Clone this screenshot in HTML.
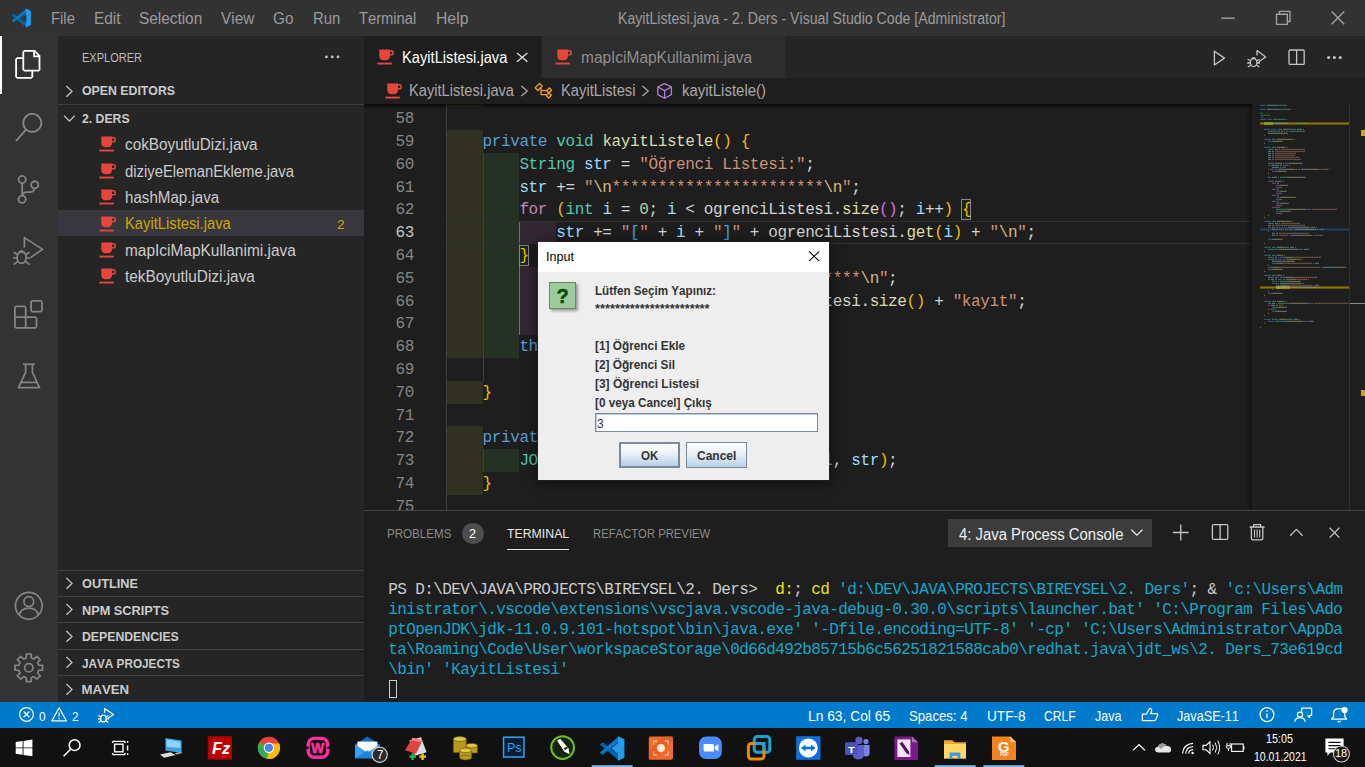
<!DOCTYPE html>
<html lang="tr"><head><meta charset="utf-8"><title>KayitListesi.java - 2. Ders - Visual Studio Code</title>
<style>

html,body{margin:0;padding:0;}
body{width:1365px;height:767px;overflow:hidden;background:#1e1e1e;position:relative;font-family:"Liberation Sans",sans-serif;font-kerning:none;}
.r{position:absolute;display:block;}
.t{position:absolute;display:block;white-space:pre;line-height:1;transform-origin:0 0;}
.q{-webkit-text-stroke:0.5px #0a4a0a;}
.i{font-style:italic;}
.wq{-webkit-text-stroke:0.6px #ff2da0;}
.code{position:absolute;white-space:pre;font-family:"Liberation Mono",monospace;line-height:1;}

</style></head>
<body>
<div class="r" style="left:0px;top:0px;width:1365px;height:36px;background:#323233;"></div>
<div class="r" style="left:0px;top:36px;width:58px;height:666px;background:#333333;"></div>
<div class="r" style="left:58px;top:36px;width:306px;height:666px;background:#252526;"></div>
<div class="r" style="left:364px;top:36px;width:1001px;height:42px;background:#252526;"></div>
<div class="r" style="left:364px;top:78px;width:1001px;height:26.4px;background:#1e1e1e;"></div>
<div class="r" style="left:364px;top:104.4px;width:1001px;height:406.4px;background:#1e1e1e;"></div>
<div class="r" style="left:364px;top:510.8px;width:1001px;height:191px;background:#1e1e1e;"></div>
<div class="r" style="left:0px;top:701.6px;width:1365px;height:26.4px;background:#007acc;"></div>
<div class="r" style="left:0px;top:728px;width:1365px;height:39px;background:#111111;"></div>
<svg class="r" style="left:10.5px;top:8px;" width="20.6" height="20" viewBox="0 0 100 100"><path fill="#0065a9" d="M2 37 L12 28 L75 77 L75 96 Z"/><path fill="#007acc" d="M2 63 L12 72 L75 23 L75 4 Z"/><path fill="#1f9cf0" d="M73 3 L98 15 L98 85 L73 97 L73 72 L50 50 L73 28 Z" fill-rule="evenodd"/><path fill="#323233" d="M75 30 L49 50 L75 70 Z"/></svg>
<span class="t" style="left:51.30px;top:10.99px;font-size:15.6px;color:#9b9b9b;transform:scaleX(0.9507);">File</span>
<span class="t" style="left:94.10px;top:10.99px;font-size:15.6px;color:#9b9b9b;transform:scaleX(0.9823);">Edit</span>
<span class="t" style="left:139.00px;top:10.99px;font-size:15.6px;color:#9b9b9b;transform:scaleX(0.9851);">Selection</span>
<span class="t" style="left:221.20px;top:10.99px;font-size:15.6px;color:#9b9b9b;transform:scaleX(0.9848);">View</span>
<span class="t" style="left:273.00px;top:10.99px;font-size:15.6px;color:#9b9b9b;transform:scaleX(0.9802);">Go</span>
<span class="t" style="left:312.50px;top:10.99px;font-size:15.6px;color:#9b9b9b;transform:scaleX(0.9577);">Run</span>
<span class="t" style="left:359.30px;top:10.99px;font-size:15.6px;color:#9b9b9b;transform:scaleX(0.9430);">Terminal</span>
<span class="t" style="left:436.00px;top:10.99px;font-size:15.6px;color:#9b9b9b;transform:scaleX(1.0100);">Help</span>
<span class="t" style="left:618.00px;top:10.99px;font-size:15.6px;color:#9b9b9b;transform:scaleX(0.9069);">KayitListesi.java - 2. Ders - Visual Studio Code [Administrator]</span>
<svg class="r" style="left:1205px;top:0px;" width="160" height="36" viewBox="0 0 160 36"><g stroke="#a0a0a0" stroke-width="1.4" fill="none"><path d="M16.3 18.2 H29.7"/><path d="M71.5 14.2 H82.3 V24.4 H71.5 Z"/><path d="M74.5 14 V11.4 H85 V21.5 H82.5"/><path d="M126.6 11.6 L139.2 24.2 M139.2 11.6 L126.6 24.2"/></g></svg>
<div class="r" style="left:364px;top:36px;width:177px;height:42px;background:#1e1e1e;"></div>
<div class="r" style="left:541.4px;top:36px;width:243.6px;height:42px;background:#2d2d2d;"></div>
<div class="r" style="left:541px;top:36px;width:1px;height:42px;background:#252526;"></div>
<svg class="r" style="left:377.2px;top:49.3px;" width="17.0" height="16.0" viewBox="0 0 17 16"><path fill="#e8463c" d="M2.3 0.4 H13 V6.5 Q13 11.2 8.6 11.2 H6.6 Q2.3 11.2 2.3 6.5 Z"/><path fill="none" stroke="#e8463c" stroke-width="1.5" d="M13 1.8 H14.6 Q16.2 1.8 16.2 3.7 Q16.2 5.8 14.6 5.8 H13"/><rect x="0.4" y="13.6" width="14.4" height="1.9" fill="#e8463c"/></svg>
<span class="t" style="left:402.20px;top:49.79px;font-size:15.6px;color:#ffffff;transform:scaleX(0.9426);">KayitListesi.java</span>
<svg class="r" style="left:514px;top:50px;" width="16" height="14" viewBox="0 0 16 14"><path stroke="#e0e0e0" stroke-width="1.3" fill="none" d="M3 2.9 L13.4 11.7 M13.4 2.9 L3 11.7"/></svg>
<svg class="r" style="left:555.3px;top:49.3px;" width="17.0" height="16.0" viewBox="0 0 17 16"><path fill="#e8463c" d="M2.3 0.4 H13 V6.5 Q13 11.2 8.6 11.2 H6.6 Q2.3 11.2 2.3 6.5 Z"/><path fill="none" stroke="#e8463c" stroke-width="1.5" d="M13 1.8 H14.6 Q16.2 1.8 16.2 3.7 Q16.2 5.8 14.6 5.8 H13"/><rect x="0.4" y="13.6" width="14.4" height="1.9" fill="#e8463c"/></svg>
<span class="t" style="left:580.70px;top:49.79px;font-size:15.6px;color:#8f8f8f;transform:scaleX(0.9915);">mapIciMapKullanimi.java</span>
<svg class="r" style="left:1205px;top:40px;" width="150" height="34" viewBox="0 0 150 34"><g stroke="#c5c5c5" stroke-width="1.3" fill="none" stroke-linejoin="round"><path d="M9.4 11.2 V25 L19.4 18.1 Z"/><path d="M52 15.5 V10.6 L60.6 17 L53.5 22"/><ellipse cx="48.6" cy="22.6" rx="3.3" ry="4"/><path d="M42.6 19.2 L45.6 20.8 M54.6 19.2 L51.6 20.8 M42.2 23 H45.2 M52 23 H55 M42.8 27 L45.6 25.2 M54.4 27 L51.6 25.2 M46.6 18.6 L48.6 17.6 L50.6 18.6"/><rect x="84" y="10" width="15.2" height="14.4" rx="1.2"/><path d="M91.6 10 V24.4"/></g><g fill="#c5c5c5"><circle cx="123.6" cy="17.6" r="1.5"/><circle cx="129.4" cy="17.6" r="1.5"/><circle cx="135.2" cy="17.6" r="1.5"/></g></svg>
<svg class="r" style="left:384.6px;top:83.2px;" width="17.0" height="16.0" viewBox="0 0 17 16"><path fill="#e8463c" d="M2.3 0.4 H13 V6.5 Q13 11.2 8.6 11.2 H6.6 Q2.3 11.2 2.3 6.5 Z"/><path fill="none" stroke="#e8463c" stroke-width="1.5" d="M13 1.8 H14.6 Q16.2 1.8 16.2 3.7 Q16.2 5.8 14.6 5.8 H13"/><rect x="0.4" y="13.6" width="14.4" height="1.9" fill="#e8463c"/></svg>
<span class="t" style="left:409.30px;top:83.49px;font-size:15.6px;color:#a9a9a9;transform:scaleX(0.9391);">KayitListesi.java</span>
<svg class="r" style="left:519.8px;top:85.2px;" width="9.0" height="12.0" viewBox="0 0 9 12"><path stroke="#a9a9a9" stroke-width="1.3" fill="none" d="M1.4 1 L7.2 6 L1.4 11"/></svg>
<svg class="r" style="left:534px;top:82px;" width="19" height="18" viewBox="0 0 19 18"><g stroke="#ee9d28" stroke-width="1.35" fill="none" stroke-linejoin="round"><path d="M1.2 5.8 L5.6 1.4 L8.2 4 L3.8 8.4 Z"/><path d="M7 5.4 V12.6 H12.4"/><path d="M7 8.6 H12.8"/><path d="M12.6 8.8 L15.4 6 L17.6 8.2 L14.8 11 Z"/><path d="M12.2 13.6 L15 10.9 L17.4 13.2 L14.6 16 Z" /></g></svg>
<span class="t" style="left:560.70px;top:83.49px;font-size:15.6px;color:#a9a9a9;transform:scaleX(0.9445);">KayitListesi</span>
<svg class="r" style="left:641.4px;top:85.2px;" width="9.0" height="12.0" viewBox="0 0 9 12"><path stroke="#a9a9a9" stroke-width="1.3" fill="none" d="M1.4 1 L7.2 6 L1.4 11"/></svg>
<svg class="r" style="left:656px;top:81.8px;" width="18" height="18" viewBox="0 0 18 18"><g stroke="#b180d7" stroke-width="1.3" fill="none" stroke-linejoin="round"><path d="M8.6 1.6 L15.4 5 V12.6 L8.6 16.2 L1.8 12.6 V5 Z"/><path d="M1.8 5 L8.6 8.6 L15.4 5 M8.6 8.6 V16.2"/></g></svg>
<span class="t" style="left:681.80px;top:83.49px;font-size:15.6px;color:#a9a9a9;transform:scaleX(0.9597);">kayitListele()</span>
<div class="r" style="left:0px;top:36px;width:2.4px;height:57.6px;background:#ffffff;"></div>
<svg class="r" style="left:14.4px;top:50.4px;" width="28.8" height="28.8" viewBox="0 0 24 24"><g fill="#ffffff"><path d="M17.5 0h-9L7 1.5V6H2.5L1 7.5v15.07L2.5 24h12.07L16 22.57V18h4.7l1.3-1.43V4.5L17.5 0zm0 2.12l2.38 2.38H17.5V2.12zm-3 20.38h-12v-15H7v9.07L8.5 18h6v4.5zm6-6h-12v-15H16V6h4.5v10.5z"/></g></svg>
<svg class="r" style="left:14.4px;top:112.8px;" width="28.8" height="28.8" viewBox="0 0 24 24"><g fill="#858585"><path d="M15.25 0a8.25 8.25 0 0 0-6.18 13.72L1 22.88l1.12 1 8.05-9.12A8.251 8.251 0 1 0 15.25.01V0zm0 15a6.75 6.75 0 1 1 0-13.5 6.75 6.75 0 0 1 0 13.5z"/></g></svg>
<svg class="r" style="left:14.4px;top:175.2px;" width="28.8" height="28.8" viewBox="0 0 24 24"><g fill="#858585"><path d="M21.007 8.222A3.738 3.738 0 0 0 15.045 5.2a3.737 3.737 0 0 0 1.156 6.583 2.988 2.988 0 0 1-2.668 1.67h-2.99a4.456 4.456 0 0 0-2.989 1.165V7.4a3.737 3.737 0 1 0-1.494 0v9.117a3.776 3.776 0 1 0 1.816.099 2.99 2.99 0 0 1 2.668-1.667h2.99a4.484 4.484 0 0 0 4.223-3.039 3.736 3.736 0 0 0 3.25-3.687zM4.565 3.738a2.242 2.242 0 1 1 4.484 0 2.242 2.242 0 0 1-4.484 0zm4.484 16.441a2.242 2.242 0 1 1-4.484 0 2.242 2.242 0 0 1 4.484 0zm8.221-9.715a2.242 2.242 0 1 1 0-4.485 2.242 2.242 0 0 1 0 4.485z"/></g></svg>
<svg class="r" style="left:0px;top:223.2px;" width="58" height="57.6" viewBox="0 0 58 57.6"><g stroke="#858585" stroke-width="1.7" fill="none" stroke-linejoin="round" stroke-linecap="butt"><path d="M24.4 24.5 V14.6 L42.6 26.4 L30.5 34.6"/><ellipse cx="21.6" cy="34.6" rx="4.6" ry="5.8"/><path d="M13.6 29.2 L17.6 31.4 M29.6 29.2 L25.6 31.4 M13 35 H17 M26.2 35 H30.2 M13.6 41.6 L17.6 38.6 M29.6 41.6 L25.6 38.6 M18.4 29.6 L21.6 27.6 L24.8 29.6"/></g></svg>
<svg class="r" style="left:14.4px;top:300.0px;" width="28.8" height="28.8" viewBox="0 0 24 24"><g fill="#858585"><path d="M13.5 1.5L15 0h7.5L24 1.5V9l-1.5 1.5H15L13.5 9V1.5zm1.5 0V9h7.5V1.5H15zM0 15V6l1.5-1.5H9L10.5 6v7.5H18l1.5 1.5v7.5L18 24H1.5L0 22.5V15zm9-1.5V6H1.5v7.5H9zM9 15H1.5v7.5H9V15zm1.5 7.5H18V15h-7.5v7.5z"/></g></svg>
<svg class="r" style="left:0px;top:348px;" width="58" height="57.6" viewBox="0 0 58 57.6"><g stroke="#858585" stroke-width="1.7" fill="none" stroke-linejoin="round"><path d="M23 16.2 H35"/><path d="M25.6 16.2 V24.4 L18.4 39.6 H39.6 L32.4 24.4 V16.2"/><path d="M20.8 34.4 H37.2"/></g></svg>
<svg class="r" style="left:0px;top:576.8px;" width="58" height="57.6" viewBox="0 0 58 57.6"><g stroke="#858585" stroke-width="1.7" fill="none"><circle cx="28.8" cy="28.8" r="13.4"/><circle cx="28.8" cy="24.6" r="4.9"/><path d="M19.4 38.2 Q20.6 31.2 28.8 31.2 Q37 31.2 38.2 38.2"/></g></svg>
<svg class="r" style="left:0px;top:639.2px;" width="58" height="57.6" viewBox="0 0 58 57.6"><g stroke="#858585" stroke-width="1.7" fill="none" stroke-linejoin="round"><path d="M26.39 15.01 L31.21 15.01 L31.34 18.92 L33.99 20.02 L36.85 17.35 L40.25 20.75 L37.58 23.61 L38.68 26.26 L42.59 26.39 L42.59 31.21 L38.68 31.34 L37.58 33.99 L40.25 36.85 L36.85 40.25 L33.99 37.58 L31.34 38.68 L31.21 42.59 L26.39 42.59 L26.26 38.68 L23.61 37.58 L20.75 40.25 L17.35 36.85 L20.02 33.99 L18.92 31.34 L15.01 31.21 L15.01 26.39 L18.92 26.26 L20.02 23.61 L17.35 20.75 L20.75 17.35 L23.61 20.02 L26.26 18.92 Z"/><circle cx="28.8" cy="28.8" r="4.2"/></g></svg>
<span class="t" style="left:81.50px;top:50.73px;font-size:13.2px;color:#bbbbbb;transform:scaleX(0.8353);">EXPLORER</span>
<svg class="r" style="left:322px;top:50px;" width="20" height="14" viewBox="0 0 20 14"><g fill="#c5c5c5"><circle cx="4.4" cy="6.9" r="1.4"/><circle cx="10.2" cy="6.9" r="1.4"/><circle cx="16" cy="6.9" r="1.4"/></g></svg>
<svg class="r" style="left:65.4px;top:85px;" width="9" height="13" viewBox="0 0 9 13"><path stroke="#c5c5c5" stroke-width="1.3" fill="none" d="M1.4 1 L7 6.4 L1.4 11.8"/></svg>
<span class="t" style="left:81.50px;top:84.33px;font-size:13.2px;color:#cccccc;font-weight:700;transform:scaleX(0.9332);">OPEN EDITORS</span>
<div class="r" style="left:58px;top:104px;width:306px;height:1px;background:#3f3f40;"></div>
<svg class="r" style="left:63px;top:114.4px;" width="13" height="9" viewBox="0 0 13 9"><path stroke="#c5c5c5" stroke-width="1.3" fill="none" d="M1 1.6 L6.4 7 L11.8 1.6"/></svg>
<span class="t" style="left:81.50px;top:111.73px;font-size:13.2px;color:#cccccc;font-weight:700;transform:scaleX(0.9276);">2. DERS</span>
<svg class="r" style="left:99px;top:136.4px;" width="17.0" height="16.0" viewBox="0 0 17 16"><path fill="#e8463c" d="M2.3 0.4 H13 V6.5 Q13 11.2 8.6 11.2 H6.6 Q2.3 11.2 2.3 6.5 Z"/><path fill="none" stroke="#e8463c" stroke-width="1.5" d="M13 1.8 H14.6 Q16.2 1.8 16.2 3.7 Q16.2 5.8 14.6 5.8 H13"/><rect x="0.4" y="13.6" width="14.4" height="1.9" fill="#e8463c"/></svg>
<span class="t" style="left:125.00px;top:137.19px;font-size:15.6px;color:#cccccc;transform:scaleX(0.9806);">cokBoyutluDizi.java</span>
<svg class="r" style="left:99px;top:162.8px;" width="17.0" height="16.0" viewBox="0 0 17 16"><path fill="#e8463c" d="M2.3 0.4 H13 V6.5 Q13 11.2 8.6 11.2 H6.6 Q2.3 11.2 2.3 6.5 Z"/><path fill="none" stroke="#e8463c" stroke-width="1.5" d="M13 1.8 H14.6 Q16.2 1.8 16.2 3.7 Q16.2 5.8 14.6 5.8 H13"/><rect x="0.4" y="13.6" width="14.4" height="1.9" fill="#e8463c"/></svg>
<span class="t" style="left:125.00px;top:163.59px;font-size:15.6px;color:#cccccc;transform:scaleX(0.9511);">diziyeElemanEkleme.java</span>
<svg class="r" style="left:99px;top:189.20000000000002px;" width="17.0" height="16.0" viewBox="0 0 17 16"><path fill="#e8463c" d="M2.3 0.4 H13 V6.5 Q13 11.2 8.6 11.2 H6.6 Q2.3 11.2 2.3 6.5 Z"/><path fill="none" stroke="#e8463c" stroke-width="1.5" d="M13 1.8 H14.6 Q16.2 1.8 16.2 3.7 Q16.2 5.8 14.6 5.8 H13"/><rect x="0.4" y="13.6" width="14.4" height="1.9" fill="#e8463c"/></svg>
<span class="t" style="left:125.00px;top:189.99px;font-size:15.6px;color:#cccccc;transform:scaleX(0.9702);">hashMap.java</span>
<div class="r" style="left:58px;top:210.0px;width:306px;height:26.4px;background:#37373d;"></div>
<svg class="r" style="left:99px;top:215.6px;" width="17.0" height="16.0" viewBox="0 0 17 16"><path fill="#e8463c" d="M2.3 0.4 H13 V6.5 Q13 11.2 8.6 11.2 H6.6 Q2.3 11.2 2.3 6.5 Z"/><path fill="none" stroke="#e8463c" stroke-width="1.5" d="M13 1.8 H14.6 Q16.2 1.8 16.2 3.7 Q16.2 5.8 14.6 5.8 H13"/><rect x="0.4" y="13.6" width="14.4" height="1.9" fill="#e8463c"/></svg>
<span class="t" style="left:125.00px;top:216.39px;font-size:15.6px;color:#cca700;transform:scaleX(0.9462);">KayitListesi.java</span>
<span class="t" style="left:336.60px;top:217.69px;font-size:13.6px;color:#cca700;transform:scaleX(1.0050);">2</span>
<svg class="r" style="left:99px;top:242.0px;" width="17.0" height="16.0" viewBox="0 0 17 16"><path fill="#e8463c" d="M2.3 0.4 H13 V6.5 Q13 11.2 8.6 11.2 H6.6 Q2.3 11.2 2.3 6.5 Z"/><path fill="none" stroke="#e8463c" stroke-width="1.5" d="M13 1.8 H14.6 Q16.2 1.8 16.2 3.7 Q16.2 5.8 14.6 5.8 H13"/><rect x="0.4" y="13.6" width="14.4" height="1.9" fill="#e8463c"/></svg>
<span class="t" style="left:125.00px;top:242.79px;font-size:15.6px;color:#cccccc;transform:scaleX(0.9903);">mapIciMapKullanimi.java</span>
<svg class="r" style="left:99px;top:268.40000000000003px;" width="17.0" height="16.0" viewBox="0 0 17 16"><path fill="#e8463c" d="M2.3 0.4 H13 V6.5 Q13 11.2 8.6 11.2 H6.6 Q2.3 11.2 2.3 6.5 Z"/><path fill="none" stroke="#e8463c" stroke-width="1.5" d="M13 1.8 H14.6 Q16.2 1.8 16.2 3.7 Q16.2 5.8 14.6 5.8 H13"/><rect x="0.4" y="13.6" width="14.4" height="1.9" fill="#e8463c"/></svg>
<span class="t" style="left:125.00px;top:269.19px;font-size:15.6px;color:#cccccc;transform:scaleX(0.9860);">tekBoyutluDizi.java</span>
<div class="r" style="left:58px;top:569.6px;width:306px;height:1px;background:#3f3f40;"></div>
<svg class="r" style="left:65.4px;top:577.0px;" width="9" height="13" viewBox="0 0 9 13"><path stroke="#c5c5c5" stroke-width="1.3" fill="none" d="M1.4 1 L7 6.4 L1.4 11.8"/></svg>
<span class="t" style="left:81.50px;top:577.43px;font-size:13.2px;color:#cccccc;font-weight:700;transform:scaleX(0.9673);">OUTLINE</span>
<div class="r" style="left:58px;top:596.0px;width:306px;height:1px;background:#3f3f40;"></div>
<svg class="r" style="left:65.4px;top:603.4px;" width="9" height="13" viewBox="0 0 9 13"><path stroke="#c5c5c5" stroke-width="1.3" fill="none" d="M1.4 1 L7 6.4 L1.4 11.8"/></svg>
<span class="t" style="left:81.50px;top:603.83px;font-size:13.2px;color:#cccccc;font-weight:700;transform:scaleX(0.9653);">NPM SCRIPTS</span>
<div class="r" style="left:58px;top:622.4px;width:306px;height:1px;background:#3f3f40;"></div>
<svg class="r" style="left:65.4px;top:629.8px;" width="9" height="13" viewBox="0 0 9 13"><path stroke="#c5c5c5" stroke-width="1.3" fill="none" d="M1.4 1 L7 6.4 L1.4 11.8"/></svg>
<span class="t" style="left:81.50px;top:630.23px;font-size:13.2px;color:#cccccc;font-weight:700;transform:scaleX(0.9302);">DEPENDENCIES</span>
<div class="r" style="left:58px;top:648.8000000000001px;width:306px;height:1px;background:#3f3f40;"></div>
<svg class="r" style="left:65.4px;top:656.2px;" width="9" height="13" viewBox="0 0 9 13"><path stroke="#c5c5c5" stroke-width="1.3" fill="none" d="M1.4 1 L7 6.4 L1.4 11.8"/></svg>
<span class="t" style="left:81.50px;top:656.63px;font-size:13.2px;color:#cccccc;font-weight:700;transform:scaleX(0.8905);">JAVA PROJECTS</span>
<div class="r" style="left:58px;top:675.2px;width:306px;height:1px;background:#3f3f40;"></div>
<svg class="r" style="left:65.4px;top:682.6px;" width="9" height="13" viewBox="0 0 9 13"><path stroke="#c5c5c5" stroke-width="1.3" fill="none" d="M1.4 1 L7 6.4 L1.4 11.8"/></svg>
<span class="t" style="left:81.50px;top:683.03px;font-size:13.2px;color:#cccccc;font-weight:700;">MAVEN</span>
<div class="r" style="left:0;top:104.4px;width:1365px;height:406.4px;overflow:hidden"><div class="r" style="left:0;top:-104.4px"><div class="r" style="left:445.7px;top:84.4px;width:36.86px;height:22.8px;background:rgba(255,255,64,0.085);"></div>
<div class="r" style="left:445.7px;top:130.0px;width:36.86px;height:22.8px;background:rgba(255,255,64,0.085);"></div>
<div class="r" style="left:445.7px;top:152.8px;width:36.86px;height:22.8px;background:rgba(255,255,64,0.085);"></div>
<div class="r" style="left:482.56px;top:152.8px;width:36.86px;height:22.8px;background:rgba(127,255,127,0.085);"></div>
<div class="r" style="left:445.7px;top:175.6px;width:36.86px;height:22.8px;background:rgba(255,255,64,0.085);"></div>
<div class="r" style="left:482.56px;top:175.6px;width:36.86px;height:22.8px;background:rgba(127,255,127,0.085);"></div>
<div class="r" style="left:445.7px;top:198.4px;width:36.86px;height:22.8px;background:rgba(255,255,64,0.085);"></div>
<div class="r" style="left:482.56px;top:198.4px;width:36.86px;height:22.8px;background:rgba(127,255,127,0.085);"></div>
<div class="r" style="left:445.7px;top:221.2px;width:36.86px;height:22.8px;background:rgba(255,255,64,0.085);"></div>
<div class="r" style="left:482.56px;top:221.2px;width:36.86px;height:22.8px;background:rgba(127,255,127,0.085);"></div>
<div class="r" style="left:519.42px;top:221.2px;width:36.86px;height:22.8px;background:rgba(255,127,255,0.085);"></div>
<div class="r" style="left:445.7px;top:244.0px;width:36.86px;height:22.8px;background:rgba(255,255,64,0.085);"></div>
<div class="r" style="left:482.56px;top:244.0px;width:36.86px;height:22.8px;background:rgba(127,255,127,0.085);"></div>
<div class="r" style="left:445.7px;top:266.8px;width:36.86px;height:22.8px;background:rgba(255,255,64,0.085);"></div>
<div class="r" style="left:482.56px;top:266.8px;width:36.86px;height:22.8px;background:rgba(127,255,127,0.085);"></div>
<div class="r" style="left:519.42px;top:266.8px;width:36.86px;height:22.8px;background:rgba(255,127,255,0.085);"></div>
<div class="r" style="left:445.7px;top:289.6px;width:36.86px;height:22.8px;background:rgba(255,255,64,0.085);"></div>
<div class="r" style="left:482.56px;top:289.6px;width:36.86px;height:22.8px;background:rgba(127,255,127,0.085);"></div>
<div class="r" style="left:519.42px;top:289.6px;width:36.86px;height:22.8px;background:rgba(255,127,255,0.085);"></div>
<div class="r" style="left:445.7px;top:312.4px;width:36.86px;height:22.8px;background:rgba(255,255,64,0.085);"></div>
<div class="r" style="left:482.56px;top:312.4px;width:36.86px;height:22.8px;background:rgba(127,255,127,0.085);"></div>
<div class="r" style="left:519.42px;top:312.4px;width:36.86px;height:22.8px;background:rgba(255,127,255,0.085);"></div>
<div class="r" style="left:445.7px;top:335.2px;width:36.86px;height:22.8px;background:rgba(255,255,64,0.085);"></div>
<div class="r" style="left:482.56px;top:335.2px;width:36.86px;height:22.8px;background:rgba(127,255,127,0.085);"></div>
<div class="r" style="left:445.7px;top:380.8px;width:36.86px;height:22.8px;background:rgba(255,255,64,0.085);"></div>
<div class="r" style="left:445.7px;top:426.4px;width:36.86px;height:22.8px;background:rgba(255,255,64,0.085);"></div>
<div class="r" style="left:445.7px;top:449.2px;width:36.86px;height:22.8px;background:rgba(255,255,64,0.085);"></div>
<div class="r" style="left:482.56px;top:449.2px;width:36.86px;height:22.8px;background:rgba(127,255,127,0.085);"></div>
<div class="r" style="left:445.7px;top:472.0px;width:36.86px;height:22.8px;background:rgba(255,255,64,0.085);"></div>
<div class="r" style="left:445.7px;top:104.4px;width:1px;height:406.4px;background:#404040;"></div>
<div class="r" style="left:482.6px;top:152.8px;width:1px;height:228.0px;background:#404040;"></div>
<div class="r" style="left:482.6px;top:449.2px;width:1px;height:22.8px;background:#404040;"></div>
<div class="r" style="left:519.4px;top:221.2px;width:1px;height:114.0px;background:#707070;"></div>
<div class="r" style="left:446px;top:221.2px;width:806px;height:22.8px;background:transparent;box-sizing:border-box;border-top:1.4px solid #303030;border-bottom:1.4px solid #303030;"></div>
<div class="r" style="left:961.2px;top:199.39999999999998px;width:10px;height:21px;background:rgba(0,100,0,0.1);box-sizing:border-box;border:1px solid #888888;"></div>
<div class="r" style="left:518.9px;top:245.0px;width:10px;height:21px;background:rgba(0,100,0,0.1);box-sizing:border-box;border:1px solid #888888;"></div>
<span class="code" style="left:395.6px;top:88.43px;font-size:16.0px;letter-spacing:-0.385px;color:#858585">57</span>
<span class="code" style="left:482.56px;top:88.43px;font-size:16.0px;letter-spacing:-0.385px;color:#d4d4d4"><span style="color:#eebc00">}</span></span>
<span class="code" style="left:395.6px;top:111.23px;font-size:16.0px;letter-spacing:-0.385px;color:#858585">58</span>
<span class="code" style="left:395.6px;top:134.03px;font-size:16.0px;letter-spacing:-0.385px;color:#858585">59</span>
<span class="code" style="left:482.56px;top:134.03px;font-size:16.0px;letter-spacing:-0.385px;color:#d4d4d4"><span style="color:#569cd6">private</span> <span style="color:#4ec9b0">void</span> <span style="color:#dcdcaa">kayitListele</span><span style="color:#eebc00">()</span> <span style="color:#eebc00">{</span></span>
<span class="code" style="left:395.6px;top:156.83px;font-size:16.0px;letter-spacing:-0.385px;color:#858585">60</span>
<span class="code" style="left:519.42px;top:156.83px;font-size:16.0px;letter-spacing:-0.385px;color:#d4d4d4"><span style="color:#4ec9b0">String</span> <span style="color:#9cdcfe">str</span> = <span style="color:#ce9178">"Öğrenci Listesi:"</span>;</span>
<span class="code" style="left:395.6px;top:179.63px;font-size:16.0px;letter-spacing:-0.385px;color:#858585">61</span>
<span class="code" style="left:519.42px;top:179.63px;font-size:16.0px;letter-spacing:-0.385px;color:#d4d4d4"><span style="color:#9cdcfe">str</span> += <span style="color:#ce9178">"</span><span style="color:#d7ba7d">\n</span><span style="color:#ce9178">***********************</span><span style="color:#d7ba7d">\n</span><span style="color:#ce9178">"</span>;</span>
<span class="code" style="left:395.6px;top:202.43px;font-size:16.0px;letter-spacing:-0.385px;color:#858585">62</span>
<span class="code" style="left:519.42px;top:202.43px;font-size:16.0px;letter-spacing:-0.385px;color:#d4d4d4"><span style="color:#c586c0">for</span> <span style="color:#eebc00">(</span><span style="color:#4ec9b0">int</span> <span style="color:#9cdcfe">i</span> = <span style="color:#b5cea8">0</span>; <span style="color:#9cdcfe">i</span> &lt; ogrenciListesi.<span style="color:#dcdcaa">size</span><span style="color:#da70d6">()</span>; <span style="color:#9cdcfe">i</span>++<span style="color:#eebc00">)</span> <span style="color:#eebc00">{</span></span>
<span class="code" style="left:395.6px;top:225.23px;font-size:16.0px;letter-spacing:-0.385px;color:#c6c6c6">63</span>
<span class="code" style="left:556.28px;top:225.23px;font-size:16.0px;letter-spacing:-0.385px;color:#d4d4d4"><span style="color:#9cdcfe">str</span> += <span style="color:#ce9178">"</span><span style="color:#3ba0e6">[</span><span style="color:#ce9178">"</span> + <span style="color:#9cdcfe">i</span> + <span style="color:#ce9178">"</span><span style="color:#3ba0e6">]</span><span style="color:#ce9178">"</span> + ogrenciListesi.<span style="color:#dcdcaa">get</span><span style="color:#eebc00">(</span><span style="color:#9cdcfe">i</span><span style="color:#eebc00">)</span> + <span style="color:#ce9178">"</span><span style="color:#d7ba7d">\n</span><span style="color:#ce9178">"</span>;</span>
<span class="code" style="left:395.6px;top:248.03px;font-size:16.0px;letter-spacing:-0.385px;color:#858585">64</span>
<span class="code" style="left:519.42px;top:248.03px;font-size:16.0px;letter-spacing:-0.385px;color:#d4d4d4"><span style="color:#eebc00">}</span></span>
<span class="code" style="left:395.6px;top:270.83px;font-size:16.0px;letter-spacing:-0.385px;color:#858585">65</span>
<span class="code" style="left:556.28px;top:270.83px;font-size:16.0px;letter-spacing:-0.385px;color:#d4d4d4"><span style="color:#9cdcfe">str</span> += <span style="color:#ce9178">"</span><span style="color:#d7ba7d">\n</span><span style="color:#ce9178">***********************</span><span style="color:#d7ba7d">\n</span><span style="color:#ce9178">"</span>;</span>
<span class="code" style="left:395.6px;top:293.63px;font-size:16.0px;letter-spacing:-0.385px;color:#858585">66</span>
<span class="code" style="left:556.28px;top:293.63px;font-size:16.0px;letter-spacing:-0.385px;color:#d4d4d4"><span style="color:#9cdcfe">str</span> += <span style="color:#ce9178">"Toplam "</span> + ogrenciListesi.<span style="color:#dcdcaa">size</span><span style="color:#eebc00">()</span> + <span style="color:#ce9178">"kayıt"</span>;</span>
<span class="code" style="left:395.6px;top:316.43px;font-size:16.0px;letter-spacing:-0.385px;color:#858585">67</span>
<span class="code" style="left:395.6px;top:339.23px;font-size:16.0px;letter-spacing:-0.385px;color:#858585">68</span>
<span class="code" style="left:519.42px;top:339.23px;font-size:16.0px;letter-spacing:-0.385px;color:#d4d4d4"><span style="color:#569cd6">this</span>.<span style="color:#dcdcaa">anaMenu</span><span style="color:#eebc00">()</span>;</span>
<span class="code" style="left:395.6px;top:362.03px;font-size:16.0px;letter-spacing:-0.385px;color:#858585">69</span>
<span class="code" style="left:395.6px;top:384.83px;font-size:16.0px;letter-spacing:-0.385px;color:#858585">70</span>
<span class="code" style="left:482.56px;top:384.83px;font-size:16.0px;letter-spacing:-0.385px;color:#d4d4d4"><span style="color:#eebc00">}</span></span>
<span class="code" style="left:395.6px;top:407.63px;font-size:16.0px;letter-spacing:-0.385px;color:#858585">71</span>
<span class="code" style="left:395.6px;top:430.43px;font-size:16.0px;letter-spacing:-0.385px;color:#858585">72</span>
<span class="code" style="left:482.56px;top:430.43px;font-size:16.0px;letter-spacing:-0.385px;color:#d4d4d4"><span style="color:#569cd6">private</span> <span style="color:#4ec9b0">void</span> <span style="color:#dcdcaa">mesaj</span><span style="color:#eebc00">(</span><span style="color:#4ec9b0">String</span> <span style="color:#9cdcfe">str</span><span style="color:#eebc00">)</span> <span style="color:#eebc00">{</span></span>
<span class="code" style="left:395.6px;top:453.23px;font-size:16.0px;letter-spacing:-0.385px;color:#858585">73</span>
<span class="code" style="left:519.42px;top:453.23px;font-size:16.0px;letter-spacing:-0.385px;color:#d4d4d4"><span style="color:#4ec9b0">JOptionPane</span>.<span style="color:#dcdcaa">showMessageDialog</span><span style="color:#eebc00">(</span><span style="color:#569cd6">null</span>, <span style="color:#9cdcfe">str</span><span style="color:#eebc00">)</span>;</span>
<span class="code" style="left:395.6px;top:476.03px;font-size:16.0px;letter-spacing:-0.385px;color:#858585">74</span>
<span class="code" style="left:482.56px;top:476.03px;font-size:16.0px;letter-spacing:-0.385px;color:#d4d4d4"><span style="color:#eebc00">}</span></span>
<span class="code" style="left:395.6px;top:498.83px;font-size:16.0px;letter-spacing:-0.385px;color:#858585">75</span></div></div>
<div class="r" style="left:1246px;top:104.4px;width:6px;height:406.4px;background:linear-gradient(90deg,#00000000,#00000066);"></div>
<div class="r" style="left:1349px;top:104.4px;width:1px;height:406.4px;background:#303031;"></div>
<svg class="r" style="left:0;top:0" width="1365" height="520" viewBox="0 0 1365 520"><rect x="1260" y="122.4" width="89" height="2.2" fill="#8a7200"/><rect x="1264" y="122.4" width="9" height="2.2" fill="#d9b400"/><rect x="1260" y="286.4" width="89" height="2.2" fill="#8a7200"/><rect x="1276" y="286.4" width="14" height="2.2" fill="#d9b400"/><rect x="1260" y="228.4" width="89" height="2.2" fill="#1f3f60"/><path stroke="#3f6f98" stroke-width="1.3" stroke-opacity="0.62" fill="none" d="M1260 105.4h6M1260 109.4h6M1260 119.4h6M1267 119.4h5M1291 123.4h3M1264 129.4h6M1271 129.4h6M1286 131.4h3M1264 139.4h7M1268 141.4h4M1264 147.4h7M1285 163.4h4M1283 165.4h4M1272 171.4h4M1276 185.4h4M1276 191.4h4M1276 197.4h4M1276 203.4h4M1306 209.4h4M1276 211.4h4M1264 221.4h7M1268 239.4h4M1264 247.4h7M1298 249.4h4M1264 255.4h7M1280 257.4h4M1278 259.4h4M1272 263.4h4M1268 267.4h4M1268 269.4h4M1264 275.4h7M1280 277.4h4M1278 279.4h4M1276 285.4h4M1268 293.4h4M1264 301.4h7M1308 303.4h4M1272 311.4h4M1264 319.4h7M1268 321.4h6M1303 321.4h4"/><path stroke="#6f97ae" stroke-width="1.3" stroke-opacity="0.62" fill="none" d="M1267 105.4h4M1272 105.4h4M1267 109.4h5M1273 109.4h5M1274 123.4h14M1297 129.4h4M1281 131.4h2M1268 133.4h2M1275 149.4h3M1268 151.4h3M1268 153.4h3M1268 155.4h3M1268 157.4h3M1268 159.4h3M1275 163.4h7M1298 163.4h3M1272 165.4h7M1272 167.4h7M1279 169.4h7M1302 169.4h7M1272 177.4h5M1297 177.4h7M1276 181.4h5M1275 223.4h3M1268 225.4h3M1277 227.4h1M1284 227.4h1M1288 227.4h14M1311 227.4h1M1272 229.4h3M1285 229.4h1M1295 229.4h14M1314 229.4h1M1272 233.4h3M1272 235.4h3M1291 235.4h14M1290 247.4h3M1304 249.4h3M1275 257.4h2M1272 259.4h2M1287 259.4h2M1272 261.4h14M1291 261.4h2M1315 263.4h2M1323 267.4h14M1275 277.4h2M1272 279.4h2M1286 279.4h2M1276 281.4h1M1297 281.4h2M1276 283.4h1M1280 283.4h14M1315 285.4h2M1276 287.4h14M1298 287.4h14M1317 287.4h1M1272 303.4h3M1272 305.4h3M1294 319.4h3M1309 321.4h3"/><path stroke="#808080" stroke-width="1.3" stroke-opacity="0.62" fill="none" d="M1271 105.4h1M1276 105.4h1M1286 105.4h1M1272 109.4h1M1278 109.4h1M1290 109.4h1M1289 123.4h1M1306 123.4h1M1284 131.4h1M1304 131.4h1M1270 133.4h1M1287 133.4h1M1272 141.4h1M1282 141.4h1M1279 149.4h1M1304 149.4h1M1272 151.4h1M1273 151.4h1M1304 151.4h1M1272 153.4h1M1273 153.4h1M1295 153.4h1M1272 155.4h1M1273 155.4h1M1294 155.4h1M1272 157.4h1M1273 157.4h1M1298 157.4h1M1272 159.4h1M1273 159.4h1M1300 159.4h1M1283 163.4h1M1289 163.4h1M1302 163.4h1M1280 165.4h1M1281 165.4h1M1280 167.4h1M1285 167.4h1M1286 169.4h1M1298 169.4h1M1299 169.4h1M1301 169.4h1M1309 169.4h1M1276 171.4h1M1286 171.4h1M1278 177.4h1M1287 177.4h1M1305 177.4h1M1278 183.4h1M1280 185.4h1M1287 185.4h1M1281 187.4h1M1278 189.4h1M1280 191.4h1M1286 191.4h1M1281 193.4h1M1278 195.4h1M1280 197.4h1M1295 197.4h1M1281 199.4h1M1278 201.4h1M1280 203.4h1M1288 203.4h1M1281 205.4h1M1279 207.4h1M1287 209.4h1M1310 209.4h1M1336 209.4h1M1280 211.4h1M1290 211.4h1M1281 213.4h1M1279 223.4h1M1299 223.4h1M1272 225.4h1M1273 225.4h1M1304 225.4h1M1279 227.4h1M1282 227.4h1M1286 227.4h1M1302 227.4h1M1309 227.4h1M1312 227.4h1M1313 227.4h1M1276 229.4h1M1277 229.4h1M1283 229.4h1M1287 229.4h1M1293 229.4h1M1309 229.4h1M1317 229.4h1M1323 229.4h1M1276 233.4h1M1277 233.4h1M1308 233.4h1M1276 235.4h1M1277 235.4h1M1289 235.4h1M1305 235.4h1M1313 235.4h1M1322 235.4h1M1272 239.4h1M1282 239.4h1M1279 249.4h1M1302 249.4h1M1308 249.4h1M1278 257.4h1M1284 257.4h1M1320 257.4h1M1275 259.4h1M1276 259.4h1M1283 259.4h1M1284 259.4h1M1286 259.4h1M1289 259.4h1M1286 261.4h1M1294 261.4h1M1276 263.4h1M1313 263.4h1M1318 263.4h1M1272 267.4h1M1321 267.4h1M1337 267.4h1M1345 267.4h1M1272 269.4h1M1282 269.4h1M1278 277.4h1M1284 277.4h1M1316 277.4h1M1275 279.4h1M1276 279.4h1M1283 279.4h1M1284 279.4h1M1288 279.4h1M1278 281.4h1M1287 281.4h1M1300 281.4h1M1278 283.4h1M1294 283.4h1M1280 285.4h1M1313 285.4h1M1318 285.4h1M1290 287.4h1M1312 287.4h1M1320 287.4h1M1272 293.4h1M1282 293.4h1M1276 303.4h1M1289 303.4h1M1312 303.4h1M1276 305.4h1M1277 305.4h1M1278 307.4h1M1286 307.4h1M1276 311.4h1M1286 311.4h1M1286 321.4h1M1307 321.4h1M1313 321.4h1"/><path stroke="#3a8f7e" stroke-width="1.3" stroke-opacity="0.62" fill="none" d="M1277 105.4h9M1279 109.4h11M1273 119.4h12M1264 123.4h9M1295 123.4h9M1278 129.4h4M1288 129.4h6M1268 131.4h12M1290 131.4h12M1272 139.4h4M1272 147.4h4M1268 149.4h6M1268 163.4h6M1268 177.4h3M1280 177.4h7M1276 209.4h11M1272 221.4h4M1268 223.4h6M1273 227.4h3M1272 247.4h4M1283 247.4h6M1268 249.4h11M1272 255.4h4M1268 257.4h6M1272 275.4h4M1268 277.4h6M1272 281.4h3M1280 281.4h7M1272 301.4h4M1268 303.4h3M1278 303.4h11M1272 307.4h6M1272 319.4h6M1287 319.4h6M1275 321.4h11"/><path stroke="#4d7a3e" stroke-width="1.3" stroke-opacity="0.62" fill="none" d="M1260 113.4h3M1261 115.4h9M1261 117.4h2"/><path stroke="#9c8830" stroke-width="1.3" stroke-opacity="0.62" fill="none" d="M1286 119.4h1M1304 123.4h1M1305 123.4h1M1287 129.4h1M1301 129.4h1M1303 129.4h1M1302 131.4h1M1303 131.4h1M1285 133.4h1M1286 133.4h1M1264 135.4h1M1291 139.4h1M1292 139.4h1M1294 139.4h1M1280 141.4h1M1281 141.4h1M1264 143.4h1M1284 147.4h1M1285 147.4h1M1287 147.4h1M1297 163.4h1M1301 163.4h1M1271 165.4h1M1287 165.4h1M1289 165.4h1M1268 169.4h1M1278 169.4h1M1293 169.4h1M1296 169.4h1M1317 169.4h1M1326 169.4h1M1327 169.4h1M1329 169.4h1M1284 171.4h1M1285 171.4h1M1268 173.4h1M1296 177.4h1M1304 177.4h1M1275 181.4h1M1281 181.4h1M1283 181.4h1M1285 185.4h1M1286 185.4h1M1284 191.4h1M1285 191.4h1M1293 197.4h1M1294 197.4h1M1286 203.4h1M1287 203.4h1M1305 209.4h1M1335 209.4h1M1288 211.4h1M1289 211.4h1M1268 215.4h1M1264 217.4h1M1289 221.4h1M1290 221.4h1M1292 221.4h1M1272 227.4h1M1307 227.4h1M1308 227.4h1M1314 227.4h1M1316 227.4h1M1313 229.4h1M1315 229.4h1M1268 231.4h1M1310 235.4h1M1311 235.4h1M1280 239.4h1M1281 239.4h1M1264 243.4h1M1282 247.4h1M1293 247.4h1M1295 247.4h1M1297 249.4h1M1307 249.4h1M1264 251.4h1M1281 255.4h1M1282 255.4h1M1284 255.4h1M1292 257.4h1M1319 257.4h1M1271 259.4h1M1296 259.4h1M1299 259.4h1M1300 259.4h1M1302 259.4h1M1290 261.4h1M1293 261.4h1M1282 263.4h1M1317 263.4h1M1268 265.4h1M1278 267.4h1M1342 267.4h1M1343 267.4h1M1344 267.4h1M1280 269.4h1M1281 269.4h1M1264 271.4h1M1280 275.4h1M1281 275.4h1M1283 275.4h1M1292 277.4h1M1315 277.4h1M1271 279.4h1M1296 279.4h1M1305 279.4h1M1306 279.4h1M1308 279.4h1M1296 281.4h1M1299 281.4h1M1275 283.4h1M1299 283.4h1M1300 283.4h1M1301 283.4h1M1303 283.4h1M1286 285.4h1M1317 285.4h1M1297 287.4h1M1316 287.4h1M1318 287.4h1M1319 287.4h1M1272 289.4h1M1268 291.4h1M1280 293.4h1M1281 293.4h1M1264 295.4h1M1282 301.4h1M1283 301.4h1M1285 301.4h1M1307 303.4h1M1271 305.4h1M1280 305.4h1M1282 305.4h1M1283 307.4h1M1285 307.4h1M1268 309.4h1M1275 309.4h1M1284 311.4h1M1285 311.4h1M1268 313.4h1M1264 315.4h1M1286 319.4h1M1297 319.4h1M1299 319.4h1M1302 321.4h1M1312 321.4h1M1264 323.4h1M1260 327.4h1"/><path stroke="#97976f" stroke-width="1.3" stroke-opacity="0.62" fill="none" d="M1283 129.4h4M1271 133.4h14M1277 139.4h14M1273 141.4h7M1277 147.4h7M1290 163.4h7M1287 169.4h6M1310 169.4h7M1277 171.4h7M1288 177.4h8M1281 185.4h4M1281 191.4h3M1281 197.4h12M1281 203.4h5M1288 209.4h17M1281 211.4h7M1277 221.4h12M1303 227.4h4M1310 229.4h3M1306 235.4h4M1273 239.4h7M1277 247.4h5M1280 249.4h17M1277 255.4h4M1285 257.4h7M1290 259.4h6M1287 261.4h3M1277 263.4h5M1273 267.4h5M1338 267.4h4M1273 269.4h7M1277 275.4h3M1285 277.4h7M1289 279.4h7M1288 281.4h8M1295 283.4h4M1281 285.4h5M1291 287.4h6M1313 287.4h3M1273 293.4h7M1277 301.4h5M1290 303.4h17M1279 307.4h4M1277 311.4h7M1279 319.4h7M1287 321.4h15"/><path stroke="#777" stroke-width="1.3" stroke-opacity="0.62" fill="none" d="M1294 129.4h1M1295 129.4h1"/><path stroke="#8e6450" stroke-width="1.3" stroke-opacity="0.62" fill="none" d="M1281 149.4h23M1275 151.4h29M1275 153.4h20M1275 155.4h19M1275 157.4h23M1275 159.4h25M1282 167.4h3M1294 169.4h2M1318 169.4h8M1312 209.4h23M1281 223.4h18M1275 225.4h29M1279 229.4h3M1289 229.4h3M1319 229.4h4M1279 233.4h29M1279 235.4h9M1315 235.4h7M1293 257.4h26M1297 259.4h2M1283 263.4h29M1279 267.4h41M1293 277.4h22M1297 279.4h8M1287 285.4h25M1314 303.4h35"/><path stroke="#8a5f88" stroke-width="1.3" stroke-opacity="0.62" fill="none" d="M1268 165.4h2M1270 169.4h4M1275 169.4h2M1268 181.4h6M1272 183.4h4M1276 187.4h5M1272 189.4h4M1276 193.4h5M1272 195.4h4M1276 199.4h5M1272 201.4h4M1276 205.4h5M1272 207.4h7M1276 213.4h5M1268 227.4h3M1268 259.4h2M1268 279.4h2M1272 283.4h2M1268 305.4h2M1270 309.4h4"/><path stroke="#7d8f76" stroke-width="1.3" stroke-opacity="0.62" fill="none" d="M1277 183.4h1M1277 189.4h1M1277 195.4h1M1277 201.4h1M1281 227.4h1M1279 305.4h1M1284 307.4h1"/></svg>
<div class="r" style="left:1360.8px;top:130px;width:4.2px;height:6.4px;background:#cca700;"></div>
<div class="r" style="left:1360.8px;top:389.6px;width:4.2px;height:6.6px;background:#cca700;"></div>
<div class="r" style="left:1350px;top:302.8px;width:15px;height:1.6px;background:#8a8a8a;"></div>
<div class="r" style="left:364px;top:104.4px;width:888px;height:5px;background:linear-gradient(#000000bb,#00000000);"></div>
<div class="r" style="left:364px;top:510.4px;width:1001px;height:1px;background:#454545;"></div>
<span class="t" style="left:387.40px;top:527.13px;font-size:13.2px;color:#8b8b8b;transform:scaleX(0.8786);">PROBLEMS</span>
<div class="r" style="left:462.2px;top:523px;width:21.4px;height:21.4px;background:#4d4d4d;border-radius:11px;"></div>
<span class="t" style="left:469.40px;top:527.23px;font-size:13.2px;color:#ffffff;transform:scaleX(0.9532);">2</span>
<span class="t" style="left:507.00px;top:527.13px;font-size:13.2px;color:#e7e7e7;transform:scaleX(0.9327);">TERMINAL</span>
<div class="r" style="left:507.3px;top:548.7px;width:61.7px;height:1.2px;background:#e7e7e7;"></div>
<span class="t" style="left:592.70px;top:527.13px;font-size:13.2px;color:#8b8b8b;transform:scaleX(0.8554);">REFACTOR PREVIEW</span>
<div class="r" style="left:948.2px;top:519.2px;width:203.6px;height:27.4px;background:#3c3c3c;"></div>
<span class="t" style="left:958.80px;top:527.19px;font-size:15.6px;color:#f0f0f0;transform:scaleX(0.9531);">4: Java Process Console</span>
<svg class="r" style="left:1130px;top:528px;" width="14" height="10" viewBox="0 0 14 10"><path stroke="#f0f0f0" stroke-width="1.2" fill="none" d="M1.4 1.8 L6.9 7.2 L12.4 1.8"/></svg>
<svg class="r" style="left:1165px;top:515px;" width="185" height="36" viewBox="0 0 185 36"><g stroke="#c5c5c5" stroke-width="1.3" fill="none" stroke-linejoin="round"><path d="M7.9 17.5 H23.6 M15.75 9.6 V25.4"/><rect x="47.4" y="9.7" width="15.4" height="14.6" rx="1.2"/><path d="M55.1 9.7 V24.3"/><path d="M84.6 12 H99.6 M88.6 11.8 V9.6 H95.6 V11.8 M86.4 12.2 V23.2 Q86.4 24.8 88 24.8 H96.2 Q97.8 24.8 97.8 23.2 V12.2"/><path d="M89.5 14.6 V22.4 M92.1 14.6 V22.4 M94.7 14.6 V22.4" stroke-width="1.1"/><path d="M125.2 20.8 L131.4 14.4 L137.6 20.8"/><path d="M164.6 12.8 L174.4 22.6 M174.4 12.8 L164.6 22.6"/></g></svg>
<span class="code" style="left:388.2px;top:581.93px;font-size:16.0px;letter-spacing:-0.600px;color:#cccccc"><span style="color:#cccccc">PS D:\DEV\JAVA\PROJECTS\BIREYSEL\2. Ders&gt; </span><span style="color:#cccccc"> </span><span style="color:#e5e510">d:</span><span style="color:#cccccc">; </span><span style="color:#e5e510">cd</span><span style="color:#cccccc"> </span><span style="color:#11a8cd">'d:\DEV\JAVA\PROJECTS\BIREYSEL\2. Ders'</span><span style="color:#cccccc">; &amp; </span><span style="color:#11a8cd">'c:\Users\Adm</span></span>
<span class="code" style="left:388.2px;top:601.93px;font-size:16.0px;letter-spacing:-0.600px;color:#cccccc"><span style="color:#11a8cd">inistrator\.vscode\extensions\vscjava.vscode-java-debug-0.30.0\scripts\launcher.bat' 'C:\Program Files\Ado</span></span>
<span class="code" style="left:388.2px;top:621.93px;font-size:16.0px;letter-spacing:-0.600px;color:#cccccc"><span style="color:#11a8cd">ptOpenJDK\jdk-11.0.9.101-hotspot\bin\java.exe' '-Dfile.encoding=UTF-8' '-cp' 'C:\Users\Administrator\AppDa</span></span>
<span class="code" style="left:388.2px;top:641.93px;font-size:16.0px;letter-spacing:-0.600px;color:#cccccc"><span style="color:#11a8cd">ta\Roaming\Code\User\workspaceStorage\0d66d492b85715b6c56251821588cab0\redhat.java\jdt_ws\2. Ders_73e619cd</span></span>
<span class="code" style="left:388.2px;top:661.93px;font-size:16.0px;letter-spacing:-0.600px;color:#cccccc"><span style="color:#11a8cd">\bin' 'KayitListesi'</span></span>
<div class="r" style="left:388.5px;top:679.5px;width:8.4px;height:18.4px;background:transparent;box-sizing:border-box;border:1px solid #cccccc;"></div>
<svg class="r" style="left:17px;top:704px;" width="100" height="22" viewBox="0 0 100 22"><g stroke="#ffffff" stroke-width="1.25" fill="none" stroke-linejoin="round"><circle cx="9.5" cy="10.4" r="6.9"/><path d="M6.6 7.5 L12.4 13.3 M12.4 7.5 L6.6 13.3"/><path d="M42.1 3.8 L49.3 16.8 H34.9 Z"/><path d="M42.1 8.4 V12.6 M42.1 13.8 V15.2"/><path d="M87.6 8.8 V4.6 L96.4 10.6 L90.8 14.2"/><ellipse cx="86.4" cy="14.4" rx="2.7" ry="3.4"/><path d="M81.4 11.6 L83.8 12.8 M91.4 11.6 L89 12.8 M81 14.8 H83.6 M89.2 14.8 H91.8 M81.6 18.4 L84 16.6 M91.2 18.4 L88.8 16.6"/></g></svg>
<span class="t" style="left:39.40px;top:709.63px;font-size:13.2px;color:#ffffff;transform:scaleX(0.8987);">0</span>
<span class="t" style="left:72.00px;top:709.63px;font-size:13.2px;color:#ffffff;transform:scaleX(0.8987);">2</span>
<span class="t" style="left:808.10px;top:708.95px;font-size:14px;color:#ffffff;transform:scaleX(0.9856);">Ln 63, Col 65</span>
<span class="t" style="left:909.20px;top:708.95px;font-size:14px;color:#ffffff;transform:scaleX(0.9395);">Spaces: 4</span>
<span class="t" style="left:986.70px;top:708.95px;font-size:14px;color:#ffffff;transform:scaleX(0.9755);">UTF-8</span>
<span class="t" style="left:1044.40px;top:708.95px;font-size:14px;color:#ffffff;transform:scaleX(0.8643);">CRLF</span>
<span class="t" style="left:1095.00px;top:708.95px;font-size:14px;color:#ffffff;transform:scaleX(0.8926);">Java</span>
<span class="t" style="left:1177.10px;top:708.95px;font-size:14px;color:#ffffff;transform:scaleX(0.9039);">JavaSE-11</span>
<svg class="r" style="left:1138px;top:704px;" width="215" height="22" viewBox="0 0 215 22"><g stroke="#ffffff" stroke-width="1.25" fill="none" stroke-linejoin="round"><path d="M4.4 16.6 V10.2 H8.2 L11.8 4.4 Q14 4.6 13.6 6.8 L12.8 9.6 H18.4 Q20 9.8 19.6 11.4 L17.8 15.6 Q17.4 16.6 16.2 16.6 Z"/><circle cx="129" cy="10.6" r="6.9"/><path d="M129 9.6 V14.2 M129 6.6 V8"/><path d="M163.6 8.6 V4.2 H173.6 V11.4 H171.6 V13.6 L169.2 11.4"/><circle cx="162" cy="10.6" r="2.6"/><path d="M156.8 17.8 Q157.2 13.6 162 13.6 Q166.8 13.6 167.2 17.8"/><path d="M193.6 15.2 H208.6 L206.8 12.6 V9 Q206.8 4.6 201.2 4.6 Q195.6 4.6 195.6 9 V12.6 Z"/><path d="M199.6 17 Q201.2 18.6 202.8 17"/></g><circle cx="206.6" cy="6" r="3.1" fill="#ffffff"/></svg>
<svg class="r" style="left:0px;top:728px;" width="1365" height="39" viewBox="0 0 1365 39"><g fill="#ffffff"><path d="M15.7 14 L22.6 13 V19.4 H15.7 Z M23.5 12.9 L32.4 11.6 V19.4 H23.5 Z M15.7 20.3 H22.6 V26.8 L15.7 25.8 Z M23.5 20.3 H32.4 V28.2 L23.5 26.9 Z"/></g><g stroke="#ffffff" stroke-width="1.5" fill="none"><circle cx="74.6" cy="17.2" r="5.4"/><path d="M70.6 21.2 L63.6 28.2"/></g><g stroke="#ffffff" stroke-width="1.4" fill="none"><rect x="114.6" y="16.2" width="8.4" height="7.6"/><path d="M112.6 13.4 H125 M112.6 26.6 H125 M112.6 13.4 V15 M125 13.4 V15 M112.6 25 V26.6 M125 25 V26.6 M127.6 13 V14.8 M127.6 17.4 V22.6 M127.6 25.2 V27"/></g><path fill="#35a2e8" d="M165.4 10 L181.6 12.6 V25 L165.4 22.4 Z"/><path fill="#8fd2ff" d="M166.6 11.6 L180.4 13.8 V20 L166.6 19 Z"/><path fill="#d9dde0" d="M160 26.6 L170.6 24.2 L175.4 27 L164.2 29.8 Z"/><path fill="#b8bec3" d="M175 25.2 L180.4 24 L182 25 L176.6 26.4 Z"/><rect x="207.8" y="8.2" width="24.2" height="23.4" fill="#b40000"/><rect x="209" y="9.4" width="21.8" height="21" fill="#bf0000" stroke="#8a0000" stroke-width="0.8" stroke-dasharray="1.4 1.2"/><circle cx="268.9" cy="19.8" r="11.1" fill="#ea4335"/><path fill="#34a853" d="M268.9 19.8 L259.3 14.2 A11.1 11.1 0 0 0 267.2 30.8 Z"/><path fill="#fbbc05" d="M268.9 19.8 L267.2 30.8 A11.1 11.1 0 0 0 279.2 15.6 L268.9 15.6 Z"/><circle cx="268.9" cy="19.8" r="5.2" fill="#ffffff"/><circle cx="268.9" cy="19.8" r="4.1" fill="#4285f4"/><g stroke="#ff2da0" fill="none"><rect x="308.2" y="10.4" width="19.6" height="18.8" rx="6" stroke-width="3.4"/></g><rect x="305.6" y="18.6" width="3" height="2.4" fill="#111"/><rect x="327.4" y="18.6" width="3" height="2.4" fill="#111"/><path fill="#0f6cbd" d="M355 16.4 L367.4 8.6 L379.8 16.4 V29.6 H355 Z"/><path fill="#ffffff" d="M357.4 13.6 H377.4 V24 H357.4 Z"/><path fill="#35a1f0" d="M355 16.4 L367.4 24.6 L379.8 16.4 V30.2 H355 Z"/><path fill="#1b86d8" d="M355 30.2 L367.4 22.6 L379.8 30.2 Z"/><circle cx="379.7" cy="26.8" r="7.6" fill="#2b2b2b" stroke="#d8d8d8" stroke-width="1.1"/><path fill="#d8dfe8" d="M409.4 12.6 L421 9.2 L426.6 24.2 L415 27.8 Z"/><path fill="#e0443e" d="M405 22.2 L412.6 9.8 L422.6 12.2 L416 25.8 Z"/><path fill="#f08a86" d="M412.6 9.8 L422.6 12.2 L421.4 14.6 L411.4 12 Z"/><path fill="#2fb344" d="M411.4 25.2 H413.8 V27.4 H416 V29.8 H413.8 V32 H411.4 V29.8 H409.2 V27.4 H411.4 Z"/><path fill="#f2c511" d="M421.4 25.2 H423.8 V27.4 H426 V29.8 H423.8 V32 H421.4 V29.8 H419.2 V27.4 H421.4 Z"/><g fill="#b89a1e" stroke="#6e5a10" stroke-width="0.7"><path d="M453.4 11 H466.2 V24.6 H453.4 Z"/><ellipse cx="459.8" cy="11" rx="6.4" ry="2.4" fill="#e0c84a"/><path d="M466 17.6 H477.4 V25 H466 Z"/><ellipse cx="471.7" cy="17.6" rx="5.7" ry="2.2" fill="#e0c84a"/><path d="M459.6 22.4 H471.6 V29.6 H459.6 Z"/><ellipse cx="465.6" cy="22.4" rx="6" ry="2.3" fill="#e0c84a"/><ellipse cx="465.6" cy="29.6" rx="6" ry="2.3"/></g><rect x="503.6" y="9.2" width="20.4" height="19.8" fill="#001d34" stroke="#2fa3f7" stroke-width="1.5"/><circle cx="562.6" cy="19.6" r="11.4" fill="#16240a" stroke="#6cc024" stroke-width="2"/><path fill="#ffffff" d="M557 12.6 L560.2 10.8 L568.6 20.6 L569.6 26.2 L564.4 23.8 Z"/><path fill="#16240a" d="M563.6 20.6 L566.8 18.8 L568 20.2 L564.8 22 Z"/><path fill="#0065a9" d="M599.8 16.6 L602.6 14.2 L618.6 27 V32.4 Z"/><path fill="#007acc" d="M599.8 24.4 L602.6 26.8 L618.6 14 V8.6 Z"/><path fill="#1f9cf0" d="M618 8.2 L624.4 11.2 V29.8 L618 32.8 V26 L611.4 20.5 L618 15 Z"/><rect x="591.6" y="37.2" width="41" height="2" fill="#76b9ed"/><rect x="648.8" y="8.4" width="24.2" height="23.4" rx="2" fill="#f26a2a"/><path fill="#e3551a" d="M648.8 24 L664 8.4 H673 V12 L653 31.8 H648.8 Z" opacity="0.55"/><circle cx="660.9" cy="20" r="4" fill="#ffe9d6"/><path stroke="#ffd3b3" stroke-width="1.2" fill="none" d="M653.6 16.6 V13.2 H657 M664.8 13.2 H668.2 V16.6 M668.2 23.6 V27 H664.8 M657 27 H653.6 V23.6"/><rect x="699" y="8.6" width="22.8" height="22.4" rx="7" fill="#4a8cff"/><path fill="#ffffff" d="M703.6 16 H712.4 Q714 16 714 17.6 V23.6 H705.2 Q703.6 23.6 703.6 22 Z M714.8 18.6 L718.4 16.2 V23.4 L714.8 21 Z"/><rect x="754.2" y="8.6" width="15.6" height="15.6" rx="3" fill="none" stroke="#19a3d6" stroke-width="3"/><rect x="748.4" y="15.4" width="15.6" height="15.6" rx="3" fill="none" stroke="#f28a00" stroke-width="3"/><path d="M755.8 15.4 H764 V22.6" fill="none" stroke="#19a3d6" stroke-width="3"/><rect x="796.2" y="8.2" width="24.2" height="23.6" fill="#0e6fe0"/><circle cx="808.3" cy="20" r="9.4" fill="#ffffff"/><path fill="#0e6fe0" d="M801 20 L805.6 16.4 V18.8 H811 V16.4 L815.6 20 L811 23.6 V21.2 H805.6 V23.6 Z"/><circle cx="866" cy="13.6" r="2.6" fill="#7b83eb"/><circle cx="859" cy="12.4" r="3.6" fill="#5b5fc7"/><path fill="#7b83eb" d="M862.6 17 H869.6 V25 Q869.6 28.6 866 28.6 Q863.6 28.6 862.6 26.8 Z"/><path fill="#5b5fc7" d="M852.6 17 H864.2 V26 Q864.2 31.4 858.4 31.4 Q852.6 31.4 852.6 26 Z"/><rect x="845" y="14.2" width="12.8" height="12.8" rx="1.4" fill="#4b53bc"/><path fill="#7b1a8b" d="M894.4 8.4 H912 L918 14.2 V32 H894.4 Z"/><path fill="#b86ac6" d="M912 8.4 L918 14.2 H912 Z"/><rect x="897.4" y="11.4" width="13" height="17.6" fill="#f3e6f6"/><path fill="#5a1067" d="M899.6 15.6 L902.2 13.8 L909 23.4 L909.6 27 L906.4 25.2 Z"/><path fill="#e8a92c" d="M944 12.2 H952.4 L954.4 14.2 H966 V30.4 H944 Z"/><path fill="#ffd766" d="M944 16 H966 V30.4 H944 Z"/><path fill="#3c9ae8" d="M949.6 24.6 H960.4 V30.4 H957.6 V27.8 H952.4 V30.4 H949.6 Z"/><rect x="934.6" y="37.2" width="41" height="2" fill="#76b9ed"/><path fill="#f58220" d="M992 8.4 H1010.4 L1016 14 V32 H992 Z"/><path fill="#ffc48c" d="M1010.4 8.4 L1016 14 H1010.4 Z"/><rect x="983.4" y="37.2" width="41" height="2" fill="#76b9ed"/><g stroke="#ffffff" stroke-width="1.3" fill="none"><path d="M1133 22.4 L1139 16.6 L1145 22.4"/><path d="M1182.6 25.6 Q1183.4 16 1193 15.4" stroke-width="1.1"/><path d="M1185.6 25.6 Q1186.2 19 1193 18.6" stroke-width="1.1"/><path d="M1188.6 25.6 Q1189 22 1193 21.6" stroke-width="1.1"/><path d="M1203 17.4 H1206 L1210 13.8 V25.4 L1206 21.8 H1203 Z" stroke-width="1.1"/><path d="M1212.6 16.8 Q1214.4 19.6 1212.6 22.4 M1215.2 14.6 Q1218.2 19.6 1215.2 24.6 M1217.8 12.8 Q1221.4 19.6 1217.8 26.4" stroke-width="1"/><rect x="1231.6" y="16" width="11.6" height="7.4" stroke-width="1.1"/><path d="M1227 15 V17.6 M1230 15 V17.6 M1226.4 17.8 H1230.6 V19.6 Q1228.5 21.6 1226.4 19.6 Z M1228.5 21 V23" stroke-width="1"/></g><path fill="#ffffff" d="M1243.2 18 H1244.4 V21.4 H1243.2 Z"/><circle cx="1192.6" cy="25" r="1.2" fill="#fff"/><path fill="#e6e6e6" d="M1158.6 24.6 Q1155 24.6 1155 21.6 Q1155.2 19 1158 18.8 Q1159.2 15.4 1162.8 15.6 Q1165.4 15.8 1166.6 18 Q1170.8 17.6 1171.2 21.4 Q1171 24.6 1168 24.6 Z"/><path fill="#9a9a9a" d="M1158 18.8 Q1159.2 15.4 1162.8 15.6 Q1165.4 15.8 1166.6 18 Q1163 18 1161 21 Q1159.4 19 1158 18.8 Z"/><path fill="#ffffff" d="M1325.4 10.6 H1343.6 V24.6 H1330.6 L1327.4 27.8 V24.6 H1325.4 Z"/><path stroke="#111" stroke-width="1.1" d="M1328.4 14.4 H1340.6 M1328.4 17.6 H1340.6 M1328.4 20.8 H1336"/><circle cx="1341.4" cy="26" r="8" fill="#1a1a1a" stroke="#cfcfcf" stroke-width="1.1"/></svg>
<span class="t" style="left:506.60px;top:741.17px;font-size:13.5px;color:#2fa3f7;transform:scaleX(0.9261);">Ps</span>
<span class="t" style="left:376.60px;top:749.24px;font-size:12px;color:#ffffff;transform:scaleX(0.9570);">7</span>
<span class="t" style="left:1335.40px;top:748.47px;font-size:11.5px;color:#ffffff;transform:scaleX(0.9534);">18</span>
<span class="t" style="left:1000.40px;top:751.86px;font-size:5.6px;color:#ffffff;font-weight:700;transform:scaleX(0.7687);">PDF</span>
<span class="t" style="left:1266.20px;top:733.14px;font-size:12px;color:#ffffff;transform:scaleX(0.8991);">15:05</span>
<span class="t" style="left:1253.60px;top:751.24px;font-size:12px;color:#ffffff;transform:scaleX(0.8758);">10.01.2021</span>
<span class="t i" style="left:212.40px;top:740.01px;font-size:17px;color:#ffffff;font-weight:700;transform:scaleX(0.9529);">Fz</span>
<span class="t wq" style="left:311.40px;top:739.70px;font-size:15px;color:#ff2da0;font-weight:700;transform:scaleX(0.9314);">W</span>
<span class="t" style="left:847.80px;top:744.76px;font-size:9.5px;color:#ffffff;font-weight:700;transform:scaleX(1.1699);">T</span>
<span class="t" style="left:998.20px;top:738.90px;font-size:15px;color:#ffffff;font-weight:700;transform:scaleX(0.9767);">G</span>
<div class="r" style="left:537px;top:241px;width:293px;height:240px;background:transparent;box-shadow:0 2px 12px rgba(0,0,0,0.55);"></div>
<div class="r" style="left:538px;top:241.8px;width:291px;height:238.4px;background:#eeeeee;"></div>
<div class="r" style="left:538px;top:241.8px;width:291px;height:29.9px;background:#ffffff;"></div>
<span class="t" style="left:546.20px;top:250.94px;font-size:12px;color:#000000;transform:scaleX(1.0486);">Input</span>
<svg class="r" style="left:806px;top:248px;" width="16" height="16" viewBox="0 0 16 16"><path stroke="#000" stroke-width="1.05" fill="none" d="M3 3.4 L13.2 13.2 M13.2 3.4 L3 13.2"/></svg>
<div class="r" style="left:549px;top:282px;width:27px;height:27px;background:#9ecb9e;box-sizing:border-box;border:1px solid #5e8f5e;box-shadow:1.5px 2px 2.5px rgba(0,0,0,0.35);"></div>
<span class="t q" style="left:556.40px;top:286.47px;font-size:20px;color:#0a4a0a;font-weight:700;">?</span>
<span class="t" style="left:595.20px;top:285.04px;font-size:12px;color:#333333;font-weight:700;transform:scaleX(0.9704);">Lütfen Seçim Yapınız:</span>
<span class="t" style="left:595.20px;top:303.44px;font-size:12px;color:#333333;font-weight:700;transform:scaleX(1.0668);">***********************</span>
<span class="t" style="left:595.20px;top:340.04px;font-size:12px;color:#333333;font-weight:700;transform:scaleX(0.9860);">[1] Öğrenci Ekle</span>
<span class="t" style="left:595.20px;top:358.94px;font-size:12px;color:#333333;font-weight:700;transform:scaleX(0.9833);">[2] Öğrenci Sil</span>
<span class="t" style="left:595.20px;top:377.84px;font-size:12px;color:#333333;font-weight:700;transform:scaleX(0.9952);">[3] Öğrenci Listesi</span>
<span class="t" style="left:595.20px;top:396.74px;font-size:12px;color:#333333;font-weight:700;transform:scaleX(0.9773);">[0 veya Cancel] Çıkış</span>
<div class="r" style="left:594.8px;top:413.1px;width:223.4px;height:19.1px;background:#ffffff;box-sizing:border-box;border:1px solid #7a8a99;box-shadow:inset 1px 1px 0 #b8cfe5;"></div>
<span class="t" style="left:597.40px;top:417.64px;font-size:12px;color:#333333;transform:scaleX(0.9869);">3</span>
<div class="r" style="left:619px;top:442.1px;width:61px;height:25.9px;background:linear-gradient(#ffffff 0%,#e9f0f7 45%,#b8cfe5 100%);box-sizing:border-box;border:2px solid #7a8a99;"></div>
<span class="t" style="left:641.00px;top:449.54px;font-size:12px;color:#333333;font-weight:700;transform:scaleX(0.9556);">OK</span>
<div class="r" style="left:686px;top:442.1px;width:61.2px;height:25.9px;background:linear-gradient(#ffffff 0%,#e9f0f7 45%,#b8cfe5 100%);box-sizing:border-box;border:1px solid #7a8a99;"></div>
<span class="t" style="left:697.00px;top:449.54px;font-size:12px;color:#333333;font-weight:700;">Cancel</span>
</body></html>
